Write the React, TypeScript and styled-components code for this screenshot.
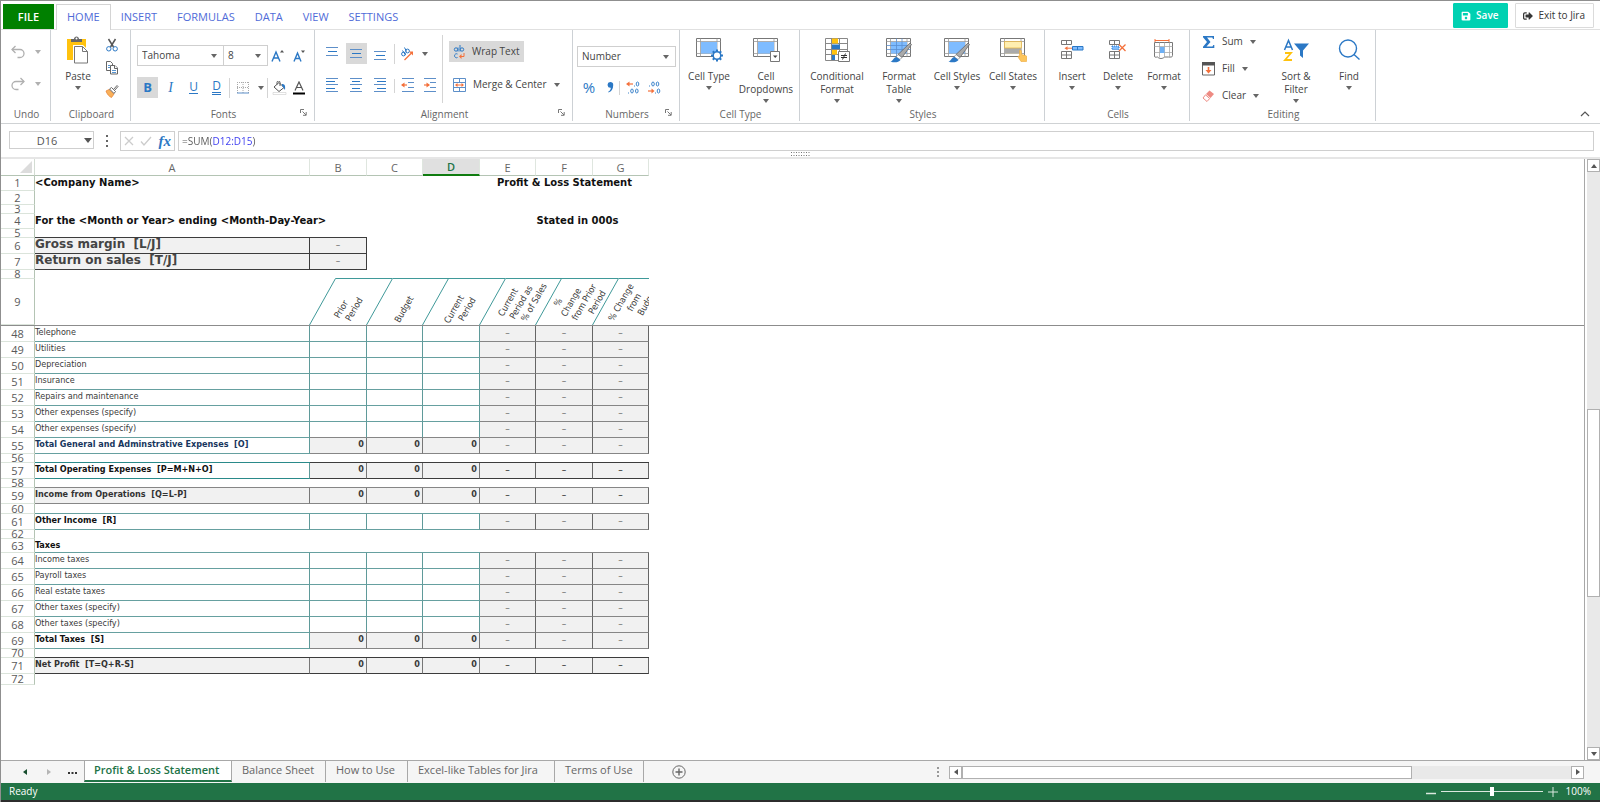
import React from "react";
import styled, { createGlobalStyle, css } from "styled-components";
import { FaSave, FaSignOutAlt } from "react-icons/fa";

const UI = `"Open Sans", "Noto Sans", sans-serif`;
const SHEET = `"DejaVu Sans Condensed", "DejaVu Sans", sans-serif`;
const WIDE = `"DejaVu Sans", sans-serif`;
const BLUE = "#2b78c5";
const ORANGE = "#f4703a";
const YELLOW = "#ffc20e";
const GREEN = "#217346";
const TEAL = "#66a0a0";
const GREY = "#868686";
const INK = "#3c3c3c";

const GlobalStyle = createGlobalStyle`
  *, *::before, *::after { box-sizing: border-box; }
  body { margin: 0; background: #fff; }
  button, input, select { font: inherit; color: inherit; }
`;

/* ---------- shell ---------- */

const Shell = styled.div`
  min-height: 100vh;
  display: flex;
  flex-direction: column;
  border-top: 1px solid #8f8f8f;
  border-left: 1px solid #8f8f8f;
  background: #fff;
  color: #444;
  font: 10px/13px ${UI};
`;

const TabBar = styled.header`
  display: flex;
  justify-content: space-between;
  height: 29px;
  border-bottom: 1px solid #e0e0e0;
`;

const TabList = styled.nav`
  display: flex;
  align-items: flex-end;
  padding-left: 2px;
`;

const FileButton = styled.button`
  width: 51px;
  height: 25px;
  margin-right: 2px;
  padding: 0;
  border: 0;
  background: #008000;
  color: #fff;
  font-size: 11px;
  font-weight: 600;
`;

const RibbonTab = styled.button<{ $active?: boolean }>`
  height: 25px;
  padding: 0 9px 2px;
  border: 1px solid transparent;
  border-bottom: 0;
  background: none;
  color: #4f6bd8;
  font-size: 11px;
  ${(p) =>
    p.$active &&
    css`
      height: 26px;
      padding: 0 10px 2px;
      margin-bottom: -1px;
      border-color: #d4d4d4;
      background: #fff;
    `}
`;

const Actions = styled.div`
  display: flex;
  gap: 7px;
  padding: 2px 6px 0 0;
`;

const ActionButton = styled.button<{ $primary?: boolean }>`
  display: flex;
  align-items: center;
  justify-content: center;
  gap: 5px;
  height: 25px;
  padding: 0 ${(p) => (p.$primary ? 9 : 8)}px 0 7px;
  border: 1px solid ${(p) => (p.$primary ? "#00d1b2" : "#dbdbdb")};
  border-radius: 1px;
  background: ${(p) => (p.$primary ? "#00d1b2" : "#fff")};
  color: ${(p) => (p.$primary ? "#fff" : "#363636")};
  font-weight: ${(p) => (p.$primary ? 600 : 400)};
`;

/* ---------- ribbon ---------- */

const Ribbon = styled.section`
  display: flex;
  height: 94px;
  padding-bottom: 2px;
  border-bottom: 1px solid #cfd2d4;
`;

const GroupBox = styled.div<{ $w: number }>`
  display: flex;
  flex-direction: column;
  justify-content: space-between;
  flex: none;
  width: ${(p) => p.$w}px;
  border-right: 1px solid #cdd1d5;
`;

const GroupBody = styled.div<{ $x: number; $y: number }>`
  display: flex;
  flex: 1;
  padding: ${(p) => p.$y}px 0 0 ${(p) => p.$x}px;
`;

const GroupFoot = styled.div`
  position: relative;
  height: 14px;
  padding-left: 2px;
  line-height: 14px;
  text-align: center;
  color: #666;
`;

const Launcher = styled.button`
  position: absolute;
  right: 7px;
  top: 2px;
  display: flex;
  padding: 0;
  border: 0;
  background: none;
`;

const Stack = styled.div<{ $gap: number; $w?: number }>`
  display: flex;
  flex-direction: column;
  gap: ${(p) => p.$gap}px;
  ${(p) => p.$w && `width: ${p.$w}px;`}
`;

const EditStack = styled(Stack)`
  align-items: flex-start;
  padding-top: 1px;
`;

const ClipStack = styled(Stack)`
  padding-top: 4px;
`;

const AlignBody = styled.div`
  width: 120px;
  padding-top: 8px;
`;

const WrapBody = styled.div`
  display: flex;
  flex-direction: column;
  align-items: flex-start;
  gap: 12px;
  padding: 6px 0 0 6px;
`;

const Line = styled.div<{ $gap?: number }>`
  display: flex;
  align-items: center;
  gap: ${(p) => p.$gap ?? 0}px;
  height: 21px;
`;

const Tool = styled.button<{ $on?: boolean; $w?: number }>`
  display: flex;
  align-items: center;
  justify-content: center;
  flex: none;
  width: ${(p) => p.$w ?? 21}px;
  height: 21px;
  padding: 0;
  border: 0;
  background: ${(p) => (p.$on ? "#d9d9d9" : "none")};
  svg { display: block; }
`;

const WideTool = styled(Tool)`
  width: auto;
  justify-content: flex-start;
  gap: 7px;
  padding: 0 4px;
  white-space: nowrap;
`;

const Rule = styled.span<{ $h?: number }>`
  flex: none;
  width: 1px;
  height: ${(p) => p.$h ?? 20}px;
  background: #d4d4d4;
`;

const BigTool = styled.button<{ $w: number }>`
  display: flex;
  flex-direction: column;
  align-items: center;
  justify-content: flex-start;
  flex: none;
  width: ${(p) => p.$w}px;
  height: 76px;
  padding: 6px 0 0;
  border: 0;
  background: none;
  line-height: 13px;
  white-space: pre-line;
  > svg:first-child { margin-bottom: 6px; }
  > svg:last-child { margin-top: 3px; }
`;

const SelectWrap = styled.span<{ $w: number }>`
  position: relative;
  display: flex;
  flex: none;
  width: ${(p) => p.$w}px;
  height: 21px;
  margin-right: -1px;
  svg { position: absolute; right: 7px; top: 9px; pointer-events: none; }
  select {
    width: 100%;
    padding: 0 4px;
    border: 1px solid #cfcfcf;
    border-radius: 0;
    background: #fff;
    appearance: none;
  }
`;

const Glyph = styled.span<{ $kind: "b" | "i" | "u" | "d" }>`
  color: ${BLUE};
  font-size: 13px;
  line-height: 13px;
  ${(p) => p.$kind === "b" && `font-weight: 700;`}
  ${(p) => p.$kind === "i" && `font-family: "Liberation Serif", serif; font-style: italic; font-size: 14px;`}
  ${(p) => p.$kind === "u" && `font-size: 12px; line-height: 12px; border-bottom: 1px solid ${BLUE};`}
  ${(p) => p.$kind === "d" && `font-size: 12px; line-height: 12px; border-bottom: 3px double ${BLUE};`}
`;

const Percent = styled.span`
  color: ${BLUE};
  font-size: 15px;
  line-height: 15px;
`;

const RibbonEnd = styled.div`
  display: flex;
  flex: 1;
  align-items: flex-end;
  justify-content: flex-end;
  padding: 0 10px 2px 0;
`;

const BareButton = styled.button`
  display: flex;
  align-items: center;
  justify-content: center;
  padding: 0;
  border: 0;
  background: none;
`;

/* ---------- formula bar ---------- */

const FormulaBar = styled.section`
  display: flex;
  align-items: flex-start;
  height: 27px;
  padding: 7px 6px 0 8px;
  color: #555;
`;

const NameBox = styled.div`
  display: flex;
  width: 85px;
  height: 18px;
  border: 1px solid #cfcfcf;
  input {
    width: 74px;
    padding: 0;
    border: 0;
    outline: 0;
    background: none;
    text-align: center;
    font-size: 11px;
  }
`;

const Dots = styled.span`
  display: flex;
  justify-content: center;
  width: 26px;
  padding-top: 4px;
`;

const FormulaTools = styled.div`
  display: flex;
  align-items: center;
  justify-content: space-around;
  width: 55px;
  height: 20px;
  margin-right: 3px;
  border: 1px solid #cfcfcf;
`;

const FormulaField = styled.div`
  display: flex;
  flex: 1;
  height: 20px;
  border: 1px solid #cfcfcf;
  input {
    flex: 1;
    padding: 0 0 0 3px;
    border: 0;
    outline: 0;
    color: transparent;
    background: linear-gradient(to right, #555 34px, #3a3af0 34px, #3a3af0 74px, #555 74px);
    -webkit-background-clip: text;
    background-clip: text;
  }
`;

const Fx = styled.span`
  color: ${BLUE};
  font: italic 600 15px/17px "Liberation Serif", serif;
`;

const Grip = styled.div`
  display: flex;
  justify-content: center;
  height: 8px;
  border-bottom: 2px solid #e6e6e6;
`;

/* ---------- sheet ---------- */

const Work = styled.main`
  display: flex;
  flex: 1;
`;

const Viewport = styled.div`
  flex: 1;
  min-width: 0;
  border-right: 1px solid #a8a8a8;
`;

const Frozen = styled.div`
  border-bottom: 1px solid #8c8c8c;
`;

const Clip = styled.div`
  width: 648px;
  overflow: hidden;
`;

const Sheet = styled.table`
  width: 648px;
  table-layout: fixed;
  border-collapse: separate;
  border-spacing: 0;
  font: 9px/13px ${SHEET};
  color: #3a3a3a;
  th, td { padding: 0; }
`;

const ColHead = styled.th<{ $on?: boolean }>`
  height: 17px;
  border-right: 1px solid #dfe6df;
  border-bottom: ${(p) => (p.$on ? "2px solid #107c10" : "1px solid #b4c4b4")};
  background: ${(p) => (p.$on ? "#e0e0e0" : "#fff")};
  color: ${(p) => (p.$on ? GREEN : "#666")};
  font: ${(p) => (p.$on ? 600 : 400)} 11px/15px ${UI};
`;

const Corner = styled.th`
  height: 17px;
  border-right: 1px solid #d3dcd3;
  border-bottom: 1px solid #b4c4b4;
  svg { display: block; margin-left: auto; margin-right: 2px; }
`;

const RowHead = styled.th<{ $h: number }>`
  height: ${(p) => p.$h}px;
  border-right: 1px solid #b4c4b4;
  border-bottom: 1px solid #dbe4db;
  color: #5a5a5a;
  font: 400 11px/${(p) => p.$h - 1}px ${UI};
`;

const Cell = styled.td<{
  $under?: string;
  $right?: string;
  $fill?: boolean;
  $align?: string;
}>`
  vertical-align: top;
  white-space: pre;
  text-align: ${(p) => p.$align ?? "left"};
  ${(p) => p.$under && `border-bottom: 1px solid ${p.$under};`}
  ${(p) => p.$right && `border-right: 1px solid ${p.$right};`}
  ${(p) => p.$fill && `background: #f1f1f1;`}
`;

const LabelCell = styled(Cell)<{ $tone?: string }>`
  ${(p) => (p.$tone === "bold" || p.$tone === "title") && `font-weight: 700; color: #111;`}
  ${(p) => p.$tone === "filled" && `font-weight: 700; color: #333;`}
  ${(p) => p.$tone === "navy" && `font-weight: 700; color: #17365d;`}
  ${(p) => p.$tone === "title" && `font-family: ${WIDE}; font-size: 10px;`}
  ${(p) => p.$tone === "ratio" && `font-family: ${WIDE}; font-size: 12px; font-weight: 700; color: #444;`}
`;

const TitleCell = styled(Cell)<{ $indent?: number }>`
  && { padding-left: ${(p) => p.$indent ?? 0}px; }
  font: 700 10px/13px ${WIDE};
  color: #111;
`;

const Zero = styled(Cell)`
  && { padding-right: 2px; }
  font-weight: 700;
`;

const Dash = styled(Cell)<{ $strong?: boolean }>`
  color: ${(p) => (p.$strong ? "#333" : "#777")};
  font-size: 10px;
`;

const SlantHead = styled.th<{ $tall: boolean }>`
  position: relative;
  height: 46px;
  padding: 0;
  font-weight: 400;
  > svg { position: absolute; left: -1px; top: -1px; overflow: visible; }
  > div {
    display: flex;
    align-items: center;
    justify-content: center;
    height: 46px;
    padding: ${(p) => (p.$tall ? "0 0 0 26px" : "14px 0 0 18px")};
  }
  span {
    display: flex;
    flex: none;
    justify-content: center;
    width: 13px;
    white-space: nowrap;
    transform: rotate(-60deg);
    font: 9px/13px ${SHEET};
  }
`;

/* ---------- scroll bars and footer ---------- */

const VScroll = styled.div`
  display: flex;
  flex-direction: column;
  width: 13px;
  margin-left: 2px;
  background: #e9e9e9;
`;

const ScrollButton = styled.button`
  display: flex;
  align-items: center;
  justify-content: center;
  flex: none;
  width: 13px;
  height: 13px;
  padding: 0;
  border: 1px solid #b0b0b0;
  background: #fff;
`;

const Thumb = styled.span<{ $grow: number }>`
  flex: ${(p) => p.$grow} 0 0;
  border: 1px solid #b0b0b0;
  background: #fff;
`;

const Gap = styled.span<{ $grow: number }>`
  flex: ${(p) => p.$grow} 0 0;
`;

const SheetBar = styled.footer`
  display: flex;
  align-items: flex-start;
  height: 23px;
  border-top: 1px solid #a8a8a8;
  background: #f5f5f5;
`;

const SheetNav = styled.div`
  display: flex;
  align-items: center;
  justify-content: space-between;
  width: 83px;
  height: 22px;
  padding: 0 7px 0 20px;
`;

const SheetTabs = styled.nav`
  display: flex;
  flex: 1;
`;

const SheetTab = styled.button<{ $active?: boolean; $w: number }>`
  width: ${(p) => p.$w}px;
  height: 21px;
  padding: 0 0 5px 10px;
  border: 0;
  border-right: 1px solid #a8a8a8;
  background: none;
  color: #666;
  font-size: 11px;
  text-align: left;
  white-space: nowrap;
  ${(p) =>
    p.$active &&
    css`
      padding: 0 0 3px 9px;
      border-left: 1px solid #a8a8a8;
      border-bottom: 2px solid ${GREEN};
      background: #fff;
      color: ${GREEN};
      font-weight: 600;
    `}
`;

const AddSheet = styled(BareButton)`
  width: 70px;
  height: 22px;
`;

const HScroll = styled.div`
  display: flex;
  align-items: center;
  flex: 0 0 42%;
  height: 22px;
  padding: 0 16px 0 9px;
`;

const HTrack = styled.div`
  display: flex;
  flex: 1;
  margin-left: 9px;
  background: #e9e9e9;
`;

const Status = styled.div`
  display: flex;
  align-items: center;
  justify-content: space-between;
  height: 19px;
  padding: 0 9px 0 8px;
  border-bottom: 2px solid #2c2c2c;
  background: ${GREEN};
  color: #fff;
`;

const Zoom = styled.div`
  display: flex;
  align-items: center;
  gap: 5px;
  output { margin-left: 3px; }
  input {
    width: 102px;
    height: 10px;
    margin: 0;
    appearance: none;
    background: linear-gradient(#dbe8df, #dbe8df) center / 100% 1px no-repeat;
  }
  input::-webkit-slider-thumb {
    appearance: none;
    width: 4px;
    height: 9px;
    background: #fff;
  }
`;

/* ---------- icons ---------- */

const Caret = ({ color = "#666" }: { color?: string }) => (
  <svg width="6" height="4" viewBox="0 0 6 4"><path d="M0 0h6L3 4z" fill={color} /></svg>
);

type Dir = "up" | "down" | "left" | "right";
const Tri = ({ dir, color = "#555" }: { dir: Dir; color?: string }) => {
  const d = { up: "M1 6h6L4 2z", down: "M1 2h6L4 6z", left: "M6 1v6L2 4z", right: "M2 1v6l4-3z" }[dir];
  return <svg width="8" height="8" viewBox="0 0 8 8"><path d={d} fill={color} /></svg>;
};

const UndoIcon = ({ flip }: { flip?: boolean }) => (
  <svg width="14" height="14" viewBox="0 0 14 14" fill="none" stroke="#b0b0b0" strokeWidth="1.3">
    <g transform={flip ? "matrix(-1 0 0 1 14 0)" : undefined}>
      <path d="M1 4.500h8a4 4 0 0 1 0 8H6.500" />
      <path d="M4.500 1L1 4.500 4.500 8" />
    </g>
  </svg>
);

const PasteIcon = () => (
  <svg width="24" height="28" viewBox="0 0 24 28">
    <path d="M1 3h19v21H1z" fill={YELLOW} />
    <path d="M5 6V3h3c0-3.500 5-3.500 5 0h3v3z" fill="#666" />
    <circle cx="10.500" cy="2.500" r="1" fill="#fff" />
    <path d="M7 9h10l6 6v12H7z" fill="#fff" />
    <path d="M8.500 10.500h8l5 5v11.500h-13z" fill="#fff" stroke="#777" />
    <path d="M16.500 10.500v5h5" fill="none" stroke="#777" />
  </svg>
);

const CutIcon = () => (
  <svg width="14" height="14" viewBox="0 0 14 14" fill="none">
    <path d="M3.500 1l5 8M10.500 1l-5 8" stroke="#555" strokeWidth="1.500" />
    <circle cx="3.800" cy="10.800" r="2.200" stroke={BLUE} />
    <circle cx="10.200" cy="10.800" r="2.200" stroke={BLUE} />
  </svg>
);

const CopyIcon = () => (
  <svg width="14" height="14" viewBox="0 0 14 14" fill="#fff" stroke="#666">
    <path d="M1.500 .5h4l2 2v7h-6z" />
    <path d="M5.500 4.500h4.500l2.500 2.500v6h-7z" />
    <path d="M9.500 4.500v3h3" />
    <path d="M7 9.500h4M7 11.500h4M3 4.500h2M3 6.500h2" stroke={BLUE} strokeWidth=".8" />
  </svg>
);

const PainterIcon = () => (
  <svg width="14" height="14" viewBox="0 0 14 14">
    <path d="M1 7l3-1.500 5 4.500-2.500 3.500C4 12.500 2 10 1 7z" fill="#f9b15a" stroke="#e8863a" strokeWidth=".8" />
    <path d="M4.500 5l2-1.500 4 4L9 9.500z" fill="#fff" stroke="#666" />
    <path d="M8.500 5.500L12 1.500l1 1-3.500 4z" fill="#fff" stroke="#666" />
  </svg>
);

const FontSizeIcon = ({ up }: { up?: boolean }) => (
  <svg width="14" height="14" viewBox="0 0 14 14" fill="none" stroke={BLUE} strokeWidth="1.400">
    {up ? <path d="M1 12.500L5 3l4 9.500M2.500 9h5" /> : <path d="M2 12.500L5.500 4 9 12.500M3 9.500h5" />}
    <path d={up ? "M9 3.500h4L11 1z" : "M9 1.500h4L11 4z"} fill="#555" stroke="none" />
  </svg>
);

const BordersIcon = () => (
  <svg width="12" height="12" viewBox="0 0 12 12" fill="none" stroke="#aaa" strokeDasharray="1 1">
    <path d="M.5 0v11M6 0v11M11.500 0v11M0 .5h12M0 5.500h12" />
    <path d="M0 11h12" stroke="#5d8fc9" strokeDasharray="none" />
  </svg>
);

const FillIcon = () => (
  <svg width="15" height="14" viewBox="0 0 15 14" fill="none">
    <path d="M2 6l5-4.500 5 5-5 4-5-4.500zM5 3.500V1.500a1.500 1.500 0 0 1 3 0V5" stroke="#555" />
    <path d="M10 3c3 0 3.500 2 3 6-1.200-1-1.200-3-3-4z" fill={BLUE} />
    <path d="M1 11.500h13v2H1z" fill="#fff" stroke="#ccc" strokeWidth=".6" />
  </svg>
);

const FontColorIcon = () => (
  <svg width="12" height="14" viewBox="0 0 12 14" fill="none">
    <path d="M2 9.500L6 1l4 8.500M3.500 6.500h5" stroke="#555" strokeWidth="1.200" />
    <path d="M0 11.500h12v2H0z" fill="#000" />
  </svg>
);

const Bars = ({ rows }: { rows: [number, number, number][] }) => (
  <svg width="13" height="15" viewBox="0 0 13 15">
    {rows.map(([x, y, w], i) => (
      <path key={i} d={`M${x} ${y}.500h${w}`} stroke={i % 2 ? BLUE : "#5d8fc9"} />
    ))}
  </svg>
);

const OrientIcon = () => (
  <svg width="14" height="14" viewBox="0 0 14 14" fill="none">
    <g stroke={BLUE} strokeWidth="1">
      <circle cx="3.500" cy="7" r="1.900" /><path d="M2.500 3.500L5.500 8" />
      <circle cx="7.500" cy="4" r="1.900" /><path d="M4.500 .5l2 4" />
    </g>
    <path d="M4.500 13l7-7" stroke={ORANGE} strokeWidth="1.200" />
    <path d="M9 4.500h4v4z" fill={ORANGE} />
  </svg>
);

const IndentIcon = ({ out }: { out?: boolean }) => (
  <svg width="14" height="15" viewBox="0 0 14 15" fill="none">
    <path d="M1 .5h12M7 4.500h6M7 9.500h6M1 13.500h12" stroke="#5d8fc9" />
    <path d="M1 7h5" stroke={ORANGE} strokeWidth="1.200" />
    <path d={out ? "M3.500 4.500v5L0 7z" : "M3.500 4.500v5L7 7z"} fill={ORANGE} />
  </svg>
);

const WrapIcon = () => (
  <svg width="12" height="14" viewBox="0 0 12 14" fill="none" stroke={BLUE}>
    <circle cx="3" cy="4.500" r="1.700" /><path d="M5 2.500V6.500M7 0v6.500" />
    <circle cx="9" cy="4.500" r="1.700" />
    <path d="M4.500 9a2 2 0 1 0 0 3.500" />
    <path d="M11 8v3.500H7" stroke={ORANGE} /><path d="M8.500 9v5L6 11.500z" fill={ORANGE} stroke="none" />
  </svg>
);

const MergeIcon = () => (
  <svg width="13" height="14" viewBox="0 0 13 14" fill="none">
    <path d="M.5.5h12v13H.5zM.5 4.500h12M.5 9.500h12M6.500.5v4M6.500 9.500v4" stroke="#5d8fc9" />
    <path d="M3 7h7" stroke={ORANGE} /><path d="M4.500 5v4L2 7zM8.500 5v4L11 7z" fill={ORANGE} />
  </svg>
);

const CommaIcon = () => (
  <svg width="7" height="11" viewBox="0 0 7 11">
    <path d="M3.200 0a3 3 0 0 1 3 3.200C6.200 7 4.500 9.500 1.500 10.500L1.200 9.800C3 9 3.800 7.500 3.800 5.800A2.900 2.900 0 1 1 3.200 0z" fill={BLUE} />
  </svg>
);

const DecimalIcon = ({ less }: { less?: boolean }) => (
  <svg width="14" height="13" viewBox="0 0 14 13" fill="none" stroke={BLUE} strokeWidth=".9">
    {less ? (
      <>
        <ellipse cx="6" cy="3" rx="1.300" ry="2" /><ellipse cx="10.500" cy="3" rx="1.300" ry="2" />
        <ellipse cx="11.500" cy="10" rx="1.300" ry="2" /><path d="M2 5h1M8 12h1" />
        <path d="M1 10h4" stroke={ORANGE} strokeWidth="1.200" /><path d="M4.500 7.500v5L7.500 10z" fill={ORANGE} stroke="none" />
      </>
    ) : (
      <>
        <ellipse cx="11.500" cy="3" rx="1.300" ry="2" /><ellipse cx="6" cy="10" rx="1.300" ry="2" />
        <ellipse cx="10.800" cy="10" rx="1.300" ry="2" /><path d="M8 5h1M2 12h1" />
        <path d="M3 3h4" stroke={ORANGE} strokeWidth="1.200" /><path d="M3.500 .5v5L0 3z" fill={ORANGE} stroke="none" />
      </>
    )}
  </svg>
);

const Frame = ({ fill = "#7fbcff", grid, children }: { fill?: string; grid?: boolean; children?: React.ReactNode }) => (
  <svg width="28" height="28" viewBox="0 0 28 28" fill="none">
    <path d="M1.500 2.500h24v18h-24z" fill="#fff" stroke="#777" />
    <path d="M5.500 2.500v18M22 2.500v18M1.500 5.500h24M1.500 17.500h24" stroke="#999" strokeWidth=".8" />
    <path d="M6 6h16v11.500H6z" fill={fill} />
    {grid && <path d="M11.500 2.500v18M17 2.500v18M1.500 9.500h24M1.500 13.500h24" stroke="#5a8fd0" strokeWidth=".8" />}
    {children}
  </svg>
);

const Brush = () => (
  <g>
    <path d="M25 7l1.500 1.500-9.500 13-4-3z" fill="#aaa" stroke="#666" strokeWidth=".8" />
    <path d="M13 18.500l4 3-2 2-4-2.500z" fill="#fff" stroke="#777" strokeWidth=".7" />
    <path d="M11.500 21l4 3c-2 2.500-6 3-10 1.500 2.500-.5 3-4 6-4.500z" fill={BLUE} />
  </g>
);

const CellTypeIcon = () => (
  <Frame>
    <g stroke={BLUE}>
      <path d="M22 13.500v12M16 19.500h12M17.800 15.300l8.400 8.400M26.200 15.300l-8.400 8.400" strokeWidth="2" />
      <circle cx="22" cy="19.500" r="3.800" fill="#fff" strokeWidth="1.500" />
    </g>
  </Frame>
);

const DropdownsIcon = () => (
  <Frame>
    <path d="M18.500 15.500h9v10h-9z" fill="#fff" stroke="#777" />
    <path d="M21 19.500h4.500L23.200 22z" fill="#444" />
  </Frame>
);

const ConditionalIcon = () => (
  <svg width="28" height="28" viewBox="0 0 28 28" fill="none">
    <path d="M2.500 2.500h22v22h-22z" fill="#fff" stroke="#888" />
    <path d="M8.500 2v23M16.500 2v23M2 7.500h23M2 13.500h23M2 18.500h23" stroke="#888" />
    <path d="M9 2.500h6v5H9zM9 14h5v4.500H9z" fill={YELLOW} />
    <path d="M9 8.500h8v4.500H9zM9 19h3v5H9z" fill={BLUE} />
    <path d="M15.500 15.500h11v10h-11z" fill="#fff" stroke="#777" />
    <path d="M18 19.500h6M18 21.500h6M22.500 17.500l-3 6" stroke="#333" />
  </svg>
);

const StatesIcon = () => (
  <Frame fill="#ffeeb0">
    <path d="M5.500 12h17v5.500h-17z" fill="#aaa" />
    <path d="M5.500 5.500h17v6.500h-17z" stroke="#e8b84a" strokeWidth=".8" />
    <path d="M20.500 14.500c1-1 2 0 2 1v3l4 1c2 .5 1.500 3 1 6h-5.500c-1-2-2.500-3-3-5 .5-.8 1.500 0 1.500 0z" fill="#fdc55c" stroke="#eda93a" strokeWidth=".6" />
  </Frame>
);

const TableStub = ({ x, y }: { x: number; y: number }) => (
  <path d={`M${x} ${y}h10v4h-10zM${x + 5} ${y}v4`} fill="#fff" stroke="#777" />
);

const InsertIcon = () => (
  <svg width="24" height="28" viewBox="0 0 24 28" fill="none">
    <TableStub x={1.5} y={4.5} />
    <path d="M1.500 15.500h10v7h-10zM6.500 15.500v7M1.500 19h10" stroke="#777" />
    <path d="M12.500 10.500h10.500v3.500h-10.500zM17.500 10.500v3.500" fill="#7fbcff" stroke={BLUE} />
    <path d="M6 12.200h6" stroke={ORANGE} /><path d="M7.500 10.200v4L4.500 12.200z" fill={ORANGE} />
  </svg>
);

const DeleteIcon = () => (
  <svg width="24" height="28" viewBox="0 0 24 28" fill="none">
    <TableStub x={3.5} y={4.5} />
    <path d="M3.500 15.500h10v7h-10zM8.500 15.500v7M3.500 19h10" stroke="#777" />
    <path d="M6 10h7v3.500H6z" fill="#7fbcff" stroke={BLUE} strokeDasharray="1 1" />
    <path d="M13 8.500l6.500 6.500M19.500 8.500L13 15" stroke={ORANGE} strokeWidth="1.300" />
  </svg>
);

const FormatIcon = () => (
  <svg width="24" height="28" viewBox="0 0 24 28" fill="none">
    <path d="M2.500 6.500h18v13c0 2-2 1.500-4 1.500h-4c-2 2-5 2-7 0-1 0-3 1-3-1z" fill="#fff" stroke="#777" />
    <path d="M7.500 6.500v15M12.500 6.500v15M17.500 6.500v15M2.500 10.500h18M2.500 16.500h18" stroke="#aaa" strokeWidth=".8" />
    <path d="M8 11h4.500v6H8z" fill="#6eb0f5" />
    <path d="M3 4.500h14M3 3v3M17 3v3" stroke={ORANGE} />
  </svg>
);

const SumIcon = () => (
  <svg width="13" height="14" viewBox="0 0 13 14"><path d="M1 1h11v3h-1l-.7-1.500H5L8.500 7 4.500 11.500h6L11.300 10h1v3H1v-1.200L5 7 1 2.200z" fill={BLUE} /></svg>
);
const FillDownIcon = () => (
  <svg width="13" height="14" viewBox="0 0 13 14" fill="none">
    <path d="M.5.5h12v12.500H.5z" fill="#fff" stroke="#666" /><path d="M0 0h13v3.500H0z" fill="#555" />
    <path d="M6.500 5v5" stroke={ORANGE} strokeWidth="1.600" /><path d="M3.500 8h6l-3 3.500z" fill={ORANGE} />
  </svg>
);
const EraserIcon = () => (
  <svg width="13" height="14" viewBox="0 0 13 14">
    <path d="M7.500 1.500l4.500 3.500-3.500 4L4 5z" fill="#ee8a82" />
    <path d="M3.500 5.800l4.200 3.700L5 12.500 1 9z" fill="#fff" stroke="#ee8a82" />
  </svg>
);

const SortIcon = () => (
  <svg width="26" height="28" viewBox="0 0 26 28" fill="none">
    <path d="M1.500 14L5.500 4.500 9.500 14M3 11h5" stroke={BLUE} strokeWidth="1.500" />
    <path d="M2 17h6l-6 7h7" stroke={YELLOW} strokeWidth="1.800" />
    <path d="M11 7.500h15l-6 7V22l-3-2.500v-5z" fill={BLUE} />
  </svg>
);

const FindIcon = () => (
  <svg width="24" height="28" viewBox="0 0 24 28" fill="none" stroke={BLUE} strokeWidth="1.400">
    <circle cx="11" cy="12.500" r="8.500" /><path d="M17 18.500l5.500 5" />
  </svg>
);

const LauncherIcon = () => (
  <svg width="7" height="7" viewBox="0 0 7 7" fill="none" stroke="#777"><path d="M.5 4V.5H4M2.500 2.500L6 6M6.200 3v3.300H3" /></svg>
);

/* ---------- ribbon parts ---------- */

const Group = (p: { name: string; w: number; x: number; y: number; launcher?: boolean; children: React.ReactNode }) => (
  <GroupBox $w={p.w} role="group" aria-label={p.name}>
    <GroupBody $x={p.x} $y={p.y}>{p.children}</GroupBody>
    <GroupFoot>
      {p.name}
      {p.launcher && <Launcher aria-label={`${p.name} options`}><LauncherIcon /></Launcher>}
    </GroupFoot>
  </GroupBox>
);

const Big = ({ w, icon, text }: { w: number; icon: React.ReactNode; text: string }) => (
  <BigTool $w={w}>{icon}<span>{text}</span><Caret /></BigTool>
);

const Picker = ({ w, label, options }: { w: number; label: string; options: string[] }) => (
  <SelectWrap $w={w}>
    <select aria-label={label}>{options.map((o) => <option key={o}>{o}</option>)}</select>
    <Caret />
  </SelectWrap>
);

const alignBars: Record<string, [number, number, number][]> = {
  top: [[0, 1, 12], [2, 5, 9], [0, 9, 12]],
  middle: [[0, 3, 12], [2, 7, 9], [0, 11, 12]],
  bottom: [[0, 5, 12], [2, 9, 9], [0, 13, 12]],
  left: [[0, 0, 12], [0, 3, 9], [0, 6, 12], [0, 10, 9], [0, 13, 12]],
  center: [[0, 0, 12], [2, 3, 8], [0, 6, 12], [2, 10, 8], [0, 13, 12]],
  right: [[0, 0, 12], [3, 3, 9], [0, 6, 12], [3, 10, 9], [0, 13, 12]],
};

const AlignTool = ({ kind, on }: { kind: string; on?: boolean }) => (
  <Tool $on={on} aria-label={`Align ${kind}`}><Bars rows={alignBars[kind]} /></Tool>
);

const RibbonPanel = () => (
  <Ribbon>
    <Group name="Undo" w={50} x={9} y={11}>
      <Stack $gap={11}>
        <Line><Tool $w={16} aria-label="Undo"><UndoIcon /></Tool><Tool $w={24} aria-label="Undo list"><Caret color="#b0b0b0" /></Tool></Line>
        <Line><Tool $w={16} aria-label="Redo"><UndoIcon flip /></Tool><Tool $w={24} aria-label="Redo list"><Caret color="#b0b0b0" /></Tool></Line>
      </Stack>
    </Group>
    <Group name="Clipboard" w={80} x={2} y={0}>
      <Big w={50} icon={<PasteIcon />} text="Paste" />
      <ClipStack $gap={2}>
        <Tool $w={18} aria-label="Cut"><CutIcon /></Tool>
        <Tool $w={18} aria-label="Copy"><CopyIcon /></Tool>
        <Tool $w={18} aria-label="Format painter"><PainterIcon /></Tool>
      </ClipStack>
    </Group>
    <Group name="Fonts" w={184} x={6} y={15} launcher>
      <Stack $gap={11}>
        <Line>
          <Picker w={87} label="Font" options={["Tahoma", "Arial", "Calibri"]} />
          <Picker w={45} label="Font size" options={["8", "9", "10", "11"]} />
          <Tool aria-label="Grow font"><FontSizeIcon up /></Tool>
          <Tool aria-label="Shrink font"><FontSizeIcon /></Tool>
        </Line>
        <Line $gap={2}>
          <Tool $on aria-label="Bold"><Glyph $kind="b">B</Glyph></Tool>
          <Tool aria-label="Italic"><Glyph $kind="i">I</Glyph></Tool>
          <Tool aria-label="Underline"><Glyph $kind="u">U</Glyph></Tool>
          <Tool aria-label="Double underline"><Glyph $kind="d">D</Glyph></Tool>
          <Rule />
          <Tool $w={22} aria-label="Borders"><BordersIcon /></Tool>
          <Tool $w={9} aria-label="Border list"><Caret /></Tool>
          <Rule />
          <Tool $w={18} aria-label="Fill colour"><FillIcon /></Tool>
          <Tool $w={18} aria-label="Font colour"><FontColorIcon /></Tool>
        </Line>
      </Stack>
    </Group>
    <Group name="Alignment" w={258} x={7} y={5} launcher>
      <AlignBody>
        <Stack $gap={11}>
          <Line $gap={3}>
            <AlignTool kind="top" /><AlignTool kind="middle" on /><AlignTool kind="bottom" />
            <Rule />
            <Tool $w={18} aria-label="Orientation"><OrientIcon /></Tool>
            <Tool $w={12} aria-label="Orientation list"><Caret /></Tool>
          </Line>
          <Line $gap={3}>
            <AlignTool kind="left" /><AlignTool kind="center" /><AlignTool kind="right" />
            <Rule $h={14} />
            <Tool $w={20} aria-label="Decrease indent"><IndentIcon out /></Tool>
            <Tool $w={18} aria-label="Increase indent"><IndentIcon /></Tool>
          </Line>
        </Stack>
      </AlignBody>
      <Rule $h={68} />
      <WrapBody>
        <WideTool $on><WrapIcon />Wrap Text</WideTool>
        <WideTool><MergeIcon />Merge &amp; Center<Caret /></WideTool>
      </WrapBody>
    </Group>
    <Group name="Numbers" w={107} x={4} y={16} launcher>
      <Stack $gap={10}>
        <Line><Picker w={99} label="Number format" options={["Number", "Currency", "Percent"]} /></Line>
        <Line>
          <Tool $w={24} aria-label="Percent"><Percent>%</Percent></Tool>
          <Tool $w={18} aria-label="Comma"><CommaIcon /></Tool>
          <Rule $h={14} />
          <Tool $w={25} aria-label="Increase decimal"><DecimalIcon /></Tool>
          <Tool $w={18} aria-label="Decrease decimal"><DecimalIcon less /></Tool>
        </Line>
      </Stack>
    </Group>
    <Group name="Cell Type" w={120} x={2} y={0}>
      <Big w={54} icon={<CellTypeIcon />} text="Cell Type" />
      <Big w={60} icon={<DropdownsIcon />} text={"Cell\nDropdowns"} />
    </Group>
    <Group name="Styles" w={245} x={2} y={0}>
      <Big w={70} icon={<ConditionalIcon />} text={"Conditional\nFormat"} />
      <Big w={54} icon={<Frame grid><Brush /></Frame>} text={"Format\nTable"} />
      <Big w={62} icon={<Frame><Brush /></Frame>} text="Cell Styles" />
      <Big w={50} icon={<StatesIcon />} text="Cell States" />
    </Group>
    <Group name="Cells" w={145} x={4} y={0}>
      <Big w={46} icon={<InsertIcon />} text="Insert" />
      <Big w={46} icon={<DeleteIcon />} text="Delete" />
      <Big w={46} icon={<FormatIcon />} text="Format" />
    </Group>
    <Group name="Editing" w={186} x={8} y={0}>
      <EditStack $gap={6} $w={71}>
        <WideTool><SumIcon />Sum<Caret /></WideTool>
        <WideTool><FillDownIcon />Fill<Caret /></WideTool>
        <WideTool><EraserIcon />Clear<Caret /></WideTool>
      </EditStack>
      <Big w={54} icon={<SortIcon />} text={"Sort &\nFilter"} />
      <Big w={52} icon={<FindIcon />} text="Find" />
    </Group>
    <RibbonEnd>
      <BareButton aria-label="Collapse ribbon">
        <svg width="10" height="10" viewBox="0 0 10 10" fill="none" stroke="#555" strokeWidth="1.200"><path d="M1 7l4-4 4 4" /></svg>
      </BareButton>
    </RibbonEnd>
  </Ribbon>
);

/* ---------- sheet data ---------- */

type Row = {
  n: number;
  h: number;
  label?: string;
  tone?: "plain" | "bold" | "navy" | "filled";
  values?: "blank" | "zero";
  strong?: boolean;
  under?: [string, string, string];
};

const item = (n: number, label: string, last?: boolean): Row => ({
  n, h: 16, label, tone: "plain", values: "blank", under: [TEAL, last ? GREY : TEAL, GREY],
});

const rows: Row[] = [
  item(48, "Telephone"),
  item(49, "Utilities"),
  item(50, "Depreciation"),
  item(51, "Insurance"),
  item(52, "Repairs and maintenance"),
  item(53, "Other expenses (specify)"),
  item(54, "Other expenses (specify)", true),
  { n: 55, h: 16, label: "Total General and Adminstrative Expenses  [O]", tone: "navy", values: "zero", under: [TEAL, GREY, GREY] },
  { n: 56, h: 9, under: ["#2a8a8a", INK, INK] },
  { n: 57, h: 16, label: "Total Operating Expenses  [P=M+N+O]", tone: "bold", values: "zero", strong: true, under: ["#2a8a8a", INK, INK] },
  { n: 58, h: 9, under: [GREY, GREY, GREY] },
  { n: 59, h: 16, label: "Income from Operations  [Q=L-P]", tone: "filled", values: "zero", strong: true, under: [GREY, GREY, GREY] },
  { n: 60, h: 10, under: [TEAL, TEAL, GREY] },
  { n: 61, h: 16, label: "Other Income  [R]", tone: "bold", values: "blank", under: [TEAL, TEAL, GREY] },
  { n: 62, h: 9 },
  { n: 63, h: 13, label: "Taxes", tone: "bold", under: [TEAL, TEAL, GREY] },
  item(64, "Income taxes"),
  item(65, "Payroll taxes"),
  item(66, "Real estate taxes"),
  item(67, "Other taxes (specify)"),
  item(68, "Other taxes (specify)", true),
  { n: 69, h: 16, label: "Total Taxes  [S]", tone: "bold", values: "zero", under: [TEAL, GREY, GREY] },
  { n: 70, h: 9, under: [INK, INK, INK] },
  { n: 71, h: 16, label: "Net Profit  [T=Q+R-S]", tone: "filled", values: "zero", strong: true, under: [INK, INK, INK] },
  { n: 72, h: 11 },
];

const slanted = [
  ["Prior", "Period"],
  ["Budget"],
  ["Current", "Period"],
  ["Current", "Period as", "% of Sales"],
  ["%", "Change", "from Prior", "Period"],
  ["% Change", "from", "Budget"],
];

const Columns = () => (
  <colgroup>
    {[34, 275, 57, 56, 57, 56, 57, 56].map((w, i) => <col key={i} width={w} />)}
  </colgroup>
);

const SheetRow = ({ row }: { row: Row }) => {
  const [a, mid, end] = row.under ?? [];
  const zero = row.values === "zero";
  const side = zero ? "#777" : "#5f9a9a";
  const fillA = row.tone === "filled";
  return (
    <tr>
      <RowHead $h={row.h} scope="row">{row.n}</RowHead>
      <LabelCell $tone={row.tone} $under={a} $fill={fillA} $right={row.values && (fillA ? "#777" : "#5f9a9a")}>
        {row.label}
      </LabelCell>
      {[0, 1, 2].map((i) => (
        <Zero key={i} $align="right" $under={mid} $fill={zero} $right={row.values && side}>{zero ? "0" : null}</Zero>
      ))}
      {[0, 1, 2].map((i) => (
        <Dash key={i} $align="center" $strong={row.strong} $under={end} $fill={!!row.values} $right={row.values && "#666"}>
          {row.values ? "–" : null}
        </Dash>
      ))}
    </tr>
  );
};

const EmptyRow = ({ n, h, under }: { n: number; h: number; under?: string }) => (
  <tr>
    <RowHead $h={h} scope="row">{n}</RowHead>
    <Cell $under={under} /><Cell $under={under} /><Cell colSpan={5} />
  </tr>
);

const RatioRow = ({ n, text }: { n: number; text: string }) => (
  <tr>
    <RowHead $h={16} scope="row">{n}</RowHead>
    <LabelCell $tone="ratio" $fill $under={INK} $right={INK}>{text}</LabelCell>
    <Dash $align="center" $fill $under={INK} $right={INK}>–</Dash>
    <Cell colSpan={5} />
  </tr>
);

const FrozenRows = () => (
  <Frozen>
    <Clip>
      <Sheet>
        <Columns />
        <thead>
          <tr>
            <Corner aria-label="Select all">
              <svg width="12" height="12" viewBox="0 0 12 12"><path d="M12 0v12H0z" fill="#dcdcdc" /></svg>
            </Corner>
            {["A", "B", "C", "D", "E", "F", "G"].map((c) => <ColHead key={c} $on={c === "D"} scope="col">{c}</ColHead>)}
          </tr>
        </thead>
        <tbody>
          <tr>
            <RowHead $h={15} scope="row">1</RowHead>
            <LabelCell $tone="title">{"<Company Name>"}</LabelCell>
            <Cell colSpan={3} />
            <TitleCell colSpan={3} $align="center">Profit &amp; Loss Statement</TitleCell>
          </tr>
          <EmptyRow n={2} h={14} />
          <EmptyRow n={3} h={9} />
          <tr>
            <RowHead $h={15} scope="row">4</RowHead>
            <LabelCell $tone="title" colSpan={3}>{"For the <Month or Year> ending <Month-Day-Year>"}</LabelCell>
            <Cell />
            <TitleCell colSpan={3} $align="center" $indent={26}>Stated in 000s</TitleCell>
          </tr>
          <EmptyRow n={5} h={9} under={INK} />
          <RatioRow n={6} text="Gross margin  [L/J]" />
          <RatioRow n={7} text="Return on sales  [T/J]" />
          <EmptyRow n={8} h={9} />
          <tr>
            <RowHead $h={46} scope="row">9</RowHead>
            <Cell />
            {slanted.map((lines, i) => (
              <SlantHead key={i} scope="col" $tall={lines.length > 2}>
                <svg width="84" height="47" viewBox="0 0 84 47" fill="none" stroke="#3f9999">
                  <path d="M.5 47L26.500.5H83" />
                </svg>
                <div>{lines.map((t) => <span key={t}>{t}</span>)}</div>
              </SlantHead>
            ))}
          </tr>
        </tbody>
      </Sheet>
    </Clip>
  </Frozen>
);

/* ---------- page ---------- */

const tabs = ["HOME", "INSERT", "FORMULAS", "DATA", "VIEW", "SETTINGS"];
const sheets: [string, number][] = [
  ["Profit & Loss Statement", 148],
  ["Balance Sheet", 94],
  ["How to Use", 82],
  ["Excel-like Tables for Jira", 147],
  ["Terms of Use", 89],
];

export default function App() {
  return (
    <>
      <GlobalStyle />
      <Shell>
        <TabBar>
          <TabList>
            <FileButton>FILE</FileButton>
            {tabs.map((t, i) => <RibbonTab key={t} $active={i === 0}>{t}</RibbonTab>)}
          </TabList>
          <Actions>
            <ActionButton $primary><FaSave size={10} />Save</ActionButton>
            <ActionButton><FaSignOutAlt size={10} />Exit to Jira</ActionButton>
          </Actions>
        </TabBar>

        <RibbonPanel />

        <FormulaBar>
          <NameBox>
            <input aria-label="Name box" defaultValue="D16" />
            <BareButton aria-label="Name list"><svg width="8" height="5" viewBox="0 0 8 5"><path d="M0 0h8L4 5z" fill="#555" /></svg></BareButton>
          </NameBox>
          <Dots><svg width="3" height="12" viewBox="0 0 3 12" fill="#666"><path d="M0 0h2v2H0zM0 5h2v2H0zM0 10h2v2H0z" /></svg></Dots>
          <FormulaTools>
            <BareButton aria-label="Cancel"><svg width="10" height="10" viewBox="0 0 10 10" stroke="#ccc" strokeWidth="1.300"><path d="M1 1l8 8M9 1L1 9" /></svg></BareButton>
            <BareButton aria-label="Enter"><svg width="12" height="10" viewBox="0 0 12 10" fill="none" stroke="#ccc" strokeWidth="1.300"><path d="M1 5.500L4 9l7-8" /></svg></BareButton>
            <BareButton aria-label="Insert function"><Fx>fx</Fx></BareButton>
          </FormulaTools>
          <FormulaField><input aria-label="Formula" defaultValue="=SUM(D12:D15)" /></FormulaField>
        </FormulaBar>
        <Grip>
          <svg width="20" height="5" viewBox="0 0 20 5" stroke="#777" strokeDasharray="1 1.500" fill="none"><path d="M0 1.500h20M0 4.500h20" /></svg>
        </Grip>

        <Work>
          <Viewport>
            <FrozenRows />
            <Sheet>
              <Columns />
              <tbody>{rows.map((r) => <SheetRow key={r.n} row={r} />)}</tbody>
            </Sheet>
          </Viewport>
          <VScroll>
            <ScrollButton aria-label="Scroll up"><Tri dir="up" /></ScrollButton>
            <Gap $grow={238} /><Thumb $grow={186} /><Gap $grow={151} />
            <ScrollButton aria-label="Scroll down"><Tri dir="down" /></ScrollButton>
          </VScroll>
        </Work>

        <SheetBar>
          <SheetNav>
            <BareButton aria-label="Previous sheet"><Tri dir="left" color="#174d2e" /></BareButton>
            <BareButton aria-label="Next sheet"><Tri dir="right" color="#b5b5b5" /></BareButton>
            <BareButton aria-label="All sheets"><svg width="9" height="8" viewBox="0 0 9 8" fill="#333"><path d="M0 4h2v2H0zM3.500 4h2v2h-2zM7 4h2v2H7z" /></svg></BareButton>
          </SheetNav>
          <SheetTabs>
            {sheets.map(([s, w], i) => <SheetTab key={s} $w={w} $active={i === 0}>{s}</SheetTab>)}
            <AddSheet aria-label="Add sheet">
              <svg width="14" height="14" viewBox="0 0 14 14" fill="none" stroke="#666"><circle cx="7" cy="7" r="6.200" /><path d="M7 3.500v7M3.500 7h7" strokeWidth="1.400" /></svg>
            </AddSheet>
          </SheetTabs>
          <HScroll>
            <svg width="3" height="10" viewBox="0 0 3 10" fill="#999"><path d="M0 0h2v2H0zM0 4h2v2H0zM0 8h2v2H0z" /></svg>
            <HTrack>
              <ScrollButton aria-label="Scroll left"><Tri dir="left" /></ScrollButton>
              <Thumb $grow={449} /><Gap $grow={159} />
              <ScrollButton aria-label="Scroll right"><Tri dir="right" /></ScrollButton>
            </HTrack>
          </HScroll>
        </SheetBar>

        <Status>
          <span>Ready</span>
          <Zoom>
            <BareButton aria-label="Zoom out"><svg width="10" height="10" viewBox="0 0 10 10" stroke="#dbe8df" strokeWidth="1.500"><path d="M0 6.500h10" /></svg></BareButton>
            <input type="range" aria-label="Zoom" defaultValue={50} />
            <BareButton aria-label="Zoom in"><svg width="10" height="10" viewBox="0 0 10 10" stroke="#dbe8df"><path d="M0 5h10M5 0v10" /></svg></BareButton>
            <output>100%</output>
          </Zoom>
        </Status>
      </Shell>
    </>
  );
}
